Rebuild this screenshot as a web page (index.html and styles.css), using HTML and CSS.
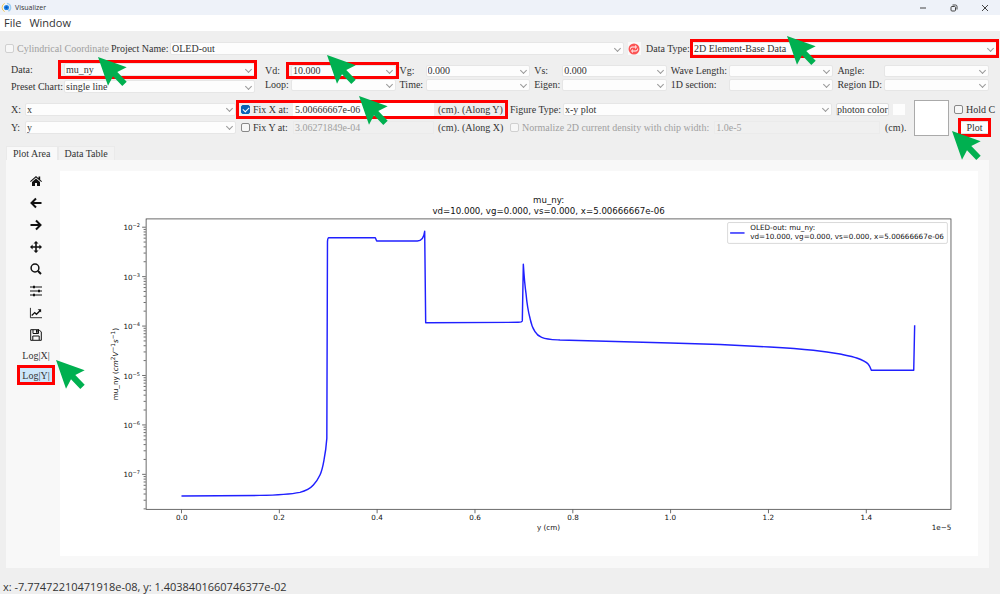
FILE: index.html
```html
<!DOCTYPE html>
<html lang="en">
<head>
<meta charset="utf-8">
<title>Visualizer</title>
<link rel="stylesheet" href="styles.css">
</head>
<body>
<svg class="defs" aria-hidden="true">
  <symbol id="pointer" viewBox="0 0 29 29"><path fill="#00b050" d="M0 0L28.7 10.3L19.3 15L28.7 24.8L24.3 29L15 19.3L10 28.7Z"/></symbol>
</svg>

<header class="titlebar">
  <svg class="logo" viewBox="0 0 12 12"><path d="M4 1.5A5 5 0 0 0 4 10.500" fill="none" stroke="#f3c64b" stroke-width="1"/><path d="M6.500 1.500A4.500 4.500 0 0 1 8 10" fill="none" stroke="#9ccdf2" stroke-width="1.500"/><circle cx="6" cy="6" r="2.800" fill="#2186e8"/><circle cx="6" cy="6" r="1.300" fill="#0a56b8"/></svg>
  <span class="title">Visualizer</span>
  <div class="window-buttons">
    <button aria-label="Minimize"><svg viewBox="0 0 10 10"><path d="M2 5h6"/></svg></button>
    <button aria-label="Restore"><svg viewBox="0 0 10 10"><rect x="2" y="3.500" width="4.500" height="4.500" rx="1"/><path d="M3.500 2h3q1.500 0 1.500 1.500v3"/></svg></button>
    <button aria-label="Close"><svg viewBox="0 0 10 10"><path d="M2 2l6 6M8 2l-6 6"/></svg></button>
  </div>
</header>
<nav class="menubar"><button>File</button><button>Window</button></nav>

<section class="project-row">
  <label class="check disabled"><input type="checkbox" disabled>Cylindrical Coordinate</label>
  <label class="project-label" for="project">Project Name:</label>
  <span class="combo project"><select id="project"><option>OLED-out</option></select></span>
  <button class="refresh" aria-label="Refresh"><svg viewBox="0 0 12 12"><circle cx="6" cy="6" r="5.500" fill="#fb5555"/><path d="M2.500 6.300V5.500Q2.500 4 4 4H8M7 2.500L8.600 4L7 5.500M9.500 5.700V6.500Q9.500 8 8 8H4M5 6.500L3.400 8L5 9.500" fill="none" stroke="#fff"/></svg></button>
  <label class="type-label" for="type">Data Type:</label>
  <span class="combo marked type"><select id="type"><option>2D Element-Base Data</option></select><svg class="pointer p-type"><use href="#pointer"/></svg></span>
</section>

<section class="data-row">
  <div class="data-grid">
    <label for="data">Data:</label>
    <span class="combo marked"><select id="data"><option>mu_ny</option></select><svg class="pointer p-data"><use href="#pointer"/></svg></span>
    <label for="preset">Preset Chart:</label>
    <span class="combo"><select id="preset"><option>single line</option></select></span>
  </div>
  <div class="bias-grid">
    <label for="vd">Vd:</label>
    <span class="combo marked"><select id="vd"><option>10.000</option></select><svg class="pointer p-vd"><use href="#pointer"/></svg></span>
    <label for="vg">Vg:</label><span class="combo"><select id="vg"><option>0.000</option></select></span>
    <label for="vs">Vs:</label><span class="combo"><select id="vs"><option>0.000</option></select></span>
    <label for="wave">Wave Length:</label><span class="combo"><select id="wave"></select></span>
    <label for="angle">Angle:</label><span class="combo"><select id="angle"></select></span>
    <label for="loop">Loop:</label><span class="combo"><select id="loop"></select></span>
    <label for="time">Time:</label><span class="combo"><select id="time"></select></span>
    <label for="eigen">Eigen:</label><span class="combo"><select id="eigen"></select></span>
    <label for="section">1D section:</label><span class="combo"><select id="section"></select></span>
    <label for="region">Region ID:</label><span class="combo"><select id="region"></select></span>
  </div>
</section>

<section class="axis-row">
  <div class="xy-grid">
    <label for="xaxis">X:</label><span class="combo"><select id="xaxis"><option>x</option></select></span>
    <label for="yaxis">Y:</label><span class="combo"><select id="yaxis"><option>y</option></select></span>
  </div>
  <div class="stack">
    <div class="fix-line marked">
      <label class="check"><input type="checkbox" checked>Fix X at:</label>
      <input class="field" type="text" value="5.00666667e-06" aria-label="X position">
      <span class="unit">(cm). (Along Y)</span>
      <svg class="pointer p-fix"><use href="#pointer"/></svg>
    </div>
    <div class="fix-line">
      <label class="check"><input type="checkbox">Fix Y at:</label>
      <input class="field" type="text" value="3.06271849e-04" aria-label="Y position" disabled>
      <span class="unit">(cm). (Along X)</span>
    </div>
  </div>
  <div class="stack figure">
    <div class="line">
      <label class="figure-label" for="figure">Figure Type:</label>
      <span class="combo"><select id="figure"><option>x-y plot</option></select></span>
      <button class="push photon">photon color</button>
      <span class="chip"></span>
    </div>
    <div class="line">
      <label class="check disabled"><input type="checkbox" disabled>Normalize 2D current density with chip width:</label>
      <input class="field" type="text" value="1.0e-5" aria-label="Chip width" disabled>
      <span class="chip-unit">(cm).</span>
    </div>
  </div>
  <div class="swatch"></div>
  <div class="stack">
    <label class="check"><input type="checkbox">Hold C</label>
    <div class="marked plot"><button class="push">Plot</button><svg class="pointer p-plot"><use href="#pointer"/></svg></div>
  </div>
</section>

<div class="tabs" role="tablist">
  <button role="tab" aria-selected="true">Plot Area</button>
  <button role="tab" aria-selected="false">Data Table</button>
</div>

<main class="panel">
  <div class="tools">
    <button aria-label="Home"><svg viewBox="0 0 12 12"><path d="M0 6.300L6 1L8.500 3.200V1.500H10.200V4.700L12 6.300L11.300 7L6 2.500L.7 7Z"/><path d="M2 6.900L6 3.500L10 6.900V11H7V8H5V11H2Z"/></svg></button>
    <button aria-label="Back"><svg viewBox="0 0 12 12"><path class="thick" d="M11.500 6H2M6 1.500L1.500 6L6 10.500"/></svg></button>
    <button aria-label="Forward"><svg viewBox="0 0 12 12"><path class="thick" d="M.5 6H10M6 1.500L10.500 6L6 10.500"/></svg></button>
    <button aria-label="Pan"><svg viewBox="0 0 12 12"><path d="M6 0L8.500 2.600H6.800V5.200H9.400V3.500L12 6L9.400 8.500V6.800H6.800V9.400H8.500L6 12L3.500 9.400H5.200V6.800H2.600V8.500L0 6L2.600 3.500V5.200H5.200V2.600H3.500Z"/></svg></button>
    <button aria-label="Zoom"><svg viewBox="0 0 12 12"><circle class="ring" cx="5" cy="5" r="3.900"/><path class="thick" d="M8 8L11 11"/></svg></button>
    <button aria-label="Configure subplots"><svg viewBox="0 0 12 12"><path class="thin" d="M0 2H12M0 6H12M0 10H12"/><path d="M3 .7h2v2.600H3zM8 4.700h2v2.600H8zM3 8.700h2v2.600H3z"/></svg></button>
    <button aria-label="Edit axes"><svg viewBox="0 0 14 12"><path class="thin" d="M.5 0V11.500H14"/><path class="ring" d="M2 9L5.500 5.500L7.500 7.500L12 3"/><path d="M9 1.500H13V5.500Z"/></svg></button>
    <button aria-label="Save"><svg viewBox="0 0 12 12"><path class="thin" d="M.7 .7H9L11.300 3V11.300H.7ZM3 .7V4.500H8.500V.7M2.800 11V7H9.200V11"/><path d="M6 1h1.700v2.700H6z"/></svg></button>
    <button class="log">Log|X|</button>
    <div class="marked log-mark"><button class="log on" aria-pressed="true">Log|Y|</button><svg class="pointer p-log"><use href="#pointer"/></svg></div>
  </div>
  <svg class="chart" viewBox="0 0 1274 534" role="img" aria-label="mu_ny against y">
    <defs>
      <path id="minor" d="M0-20.700h-3M0-32.700h-3M0-41.300h-3M0-48h-3M0-53.400h-3M0-58h-3M0-62h-3M0-65.500h-3"/>
    </defs>
    <g class="axis">
      <rect x="119.500" y="66.500" width="1117" height="403"/>
      <path d="M168.600 470v5M304.400 470v5M440.100 470v5M575.900 470v5M711.700 470v5M847.400 470v5M983.200 470v5M1119 470v5"/>
      <path d="M119 78h-5M119 146.600h-5M119 215.200h-5M119 283.800h-5M119 352.400h-5M119 421h-5"/>
      <use href="#minor" x="119" y="146.600"/><use href="#minor" x="119" y="215.200"/><use href="#minor" x="119" y="283.800"/><use href="#minor" x="119" y="352.400"/><use href="#minor" x="119" y="421"/><use href="#minor" x="119" y="489.600"/>
    </g>
    <path class="series" d="M168.600 451L277 450.200C300 449.800 318 449 333 446C341 444 347 441 351.600 435.800C356 431 358 428 360.800 421.900C364 415 365 409 366.400 401C368.500 390 369.500 382 370.300 371L371.200 98Q371.500 92.600 373 92.600H437.600L439.500 97.100H495.900Q504.500 97 506.100 83.700L507.500 210.600L636 210Q641 210 641.600 208L643 129.500C644 145 645 158 646.700 169.700C648 184 650 196 652.300 204.400C654 213 656 218 659.200 223C662 228 665 229.500 668.500 230.800C676 234 684 234 693.900 234.500L847 238.700L916 240.700L985 244.300C1010 245.700 1030 247.200 1045.400 248.800C1061 250.500 1071 252 1082.500 254C1092 256 1100 257.500 1105.700 259.500C1113 262 1119 265 1121.800 268.300Q1124 271 1126 276.600H1184.800L1186.100 214"/>
    <g class="heading"><text x="678" y="45">mu_ny:</text><text x="678" y="60">vd=10.000, vg=0.000, vs=0.000, x=5.00666667e-06</text></g>
    <g class="legend">
      <rect x="926.500" y="71.500" width="305" height="29" rx="2"/>
      <path class="series" d="M930 86h20"/>
      <text x="958" y="82">OLED-out: mu_ny:</text><text x="958" y="94">vd=10.000, vg=0.000, vs=0.000, x=5.00666667e-06</text>
    </g>
    <g class="x-ticks">
      <text x="169" y="485">0.0</text><text x="304" y="485">0.2</text><text x="440" y="485">0.4</text><text x="576" y="485">0.6</text><text x="712" y="485">0.8</text><text x="847" y="485">1.0</text><text x="983" y="485">1.2</text><text x="1119" y="485">1.4</text>
      <text x="678" y="498">y (cm)</text>
    </g>
    <g class="y-ticks">
      <text x="111" y="82">10<tspan class="sup" dy="-4">−2</tspan></text>
      <text x="111" y="151">10<tspan class="sup" dy="-4">−3</tspan></text>
      <text x="111" y="219">10<tspan class="sup" dy="-4">−4</tspan></text>
      <text x="111" y="288">10<tspan class="sup" dy="-4">−5</tspan></text>
      <text x="111" y="356">10<tspan class="sup" dy="-4">−6</tspan></text>
      <text x="111" y="425">10<tspan class="sup" dy="-4">−7</tspan></text>
      <text x="1237" y="498">1e−5</text>
    </g>
    <text class="y-title" transform="translate(80 268) rotate(-90)">mu_ny (<tspan class="var">cm</tspan><tspan class="sup" dy="-4">2</tspan><tspan class="var" dy="4">V</tspan><tspan class="sup" dy="-4">−1</tspan><tspan class="var" dy="4">s</tspan><tspan class="sup" dy="-4">−1</tspan><tspan dy="4">)</tspan></text>
  </svg>
</main>

<footer class="status">x: -7.77472210471918e-08, y: 1.4038401660746377e-02</footer>
</body>
</html>
```

FILE: styles.css
```css
* { box-sizing: border-box; }

body {
  margin: 0;
  min-height: 100vh;
  display: flex;
  flex-direction: column;
  background: #efefef;
  color: #333;
  font: 10px/13px "Liberation Serif", serif;
  overflow-x: hidden;
}

button, input, select {
  font: inherit;
  color: inherit;
  margin: 0;
  padding: 0;
  border: 0;
  background: none;
}

label, span, button { white-space: nowrap; }

.defs { position: absolute; width: 0; height: 0; }

/* window frame */
.titlebar {
  display: flex;
  align-items: center;
  height: 15px;
  padding-left: 1px;
  background: #eef2f9;
  font: 7px/15px "Open Sans", sans-serif;
}
.logo { width: 11px; height: 11px; margin-right: 3px; }
.window-buttons { display: flex; margin-left: auto; }
.window-buttons button { width: 31px; height: 15px; display: grid; place-items: center; }
.window-buttons svg { width: 10px; height: 10px; fill: none; stroke: #444; }
.menubar {
  display: flex;
  gap: 8px;
  height: 16px;
  padding-left: 4px;
  background: #fff;
  font: 11px/16px "Open Sans", sans-serif;
}

/* shared controls */
.combo { position: relative; display: block; min-width: 0; }
.combo select {
  appearance: none;
  display: block;
  width: 100%;
  height: 100%;
  padding: 0 12px 0 1px;
  background: #fdfdfd;
  border: 1px solid #e6e6e6;
  border-radius: 2px;
  line-height: 11px;
}
.combo::before {
  content: "";
  position: absolute;
  right: 4px;
  top: calc(50% - 3px);
  width: 4px;
  height: 4px;
  border: solid #999;
  border-width: 0 1px 1px 0;
  transform: rotate(45deg);
  pointer-events: none;
}
.check { display: flex; align-items: center; gap: 3px; }
.check input {
  appearance: none;
  flex: none;
  width: 9px;
  height: 9px;
  border: 1px solid #888;
  border-radius: 2px;
  background: #f7f7f7;
}
.check input:checked { background: #0a62b5; border-color: #0a62b5; }
.check input:checked::before {
  content: "";
  display: block;
  width: 5px;
  height: 3px;
  margin: 1px;
  border: solid #fff;
  border-width: 0 0 1px 1px;
  transform: rotate(-45deg);
}
.disabled { color: #a0a0a0; }
.check input:disabled { border-color: #d0d0d0; }
.field { min-width: 0; height: 13px; padding-left: 2px; background: #fff; }
.field:disabled { background: #f0f0f0; color: #a0a0a0; border: 1px solid #ebebeb; padding-left: 1px; }
.push { height: 13px; background: #fdfdfd; border: 1px solid #ddd; border-radius: 2px; line-height: 11px; }

/* tutorial highlights */
.marked { position: relative; }
.marked::after {
  content: "";
  position: absolute;
  inset: -3px -2px;
  border: 3px solid #f00;
  pointer-events: none;
}
.pointer { position: absolute; z-index: 2; width: 29px; height: 29px; pointer-events: none; }
.p-type { left: 95px; top: -6px; }
.p-data { left: 34px; top: -6px; }
.p-vd { left: 36px; top: -10px; }
.p-fix { left: 118px; top: -7px; }
.p-plot { left: -8px; top: 10px; }
.p-log { left: 37px; top: -8px; }

/* project row */
.project-row { display: flex; align-items: center; height: 13px; margin: 11px 3px 0 5px; }
.project-row .combo { height: 13px; }
.project-label { width: 59px; margin-left: 7px; }
.project-row .check { width: 99px; }
.project { flex: 454 1 0; }
.refresh { width: 13px; height: 13px; margin: 0 5px 0 4px; background: #fafafa; }
.refresh svg { display: block; width: 12px; height: 12px; }
.type-label { width: 46px; }
.type { flex: 305 1 0; }

/* data and bias row */
.data-row {
  display: grid;
  grid-template-columns: 244fr 724fr;
  gap: 10px;
  align-items: center;
  margin: 8px 11px 0;
}
.data-grid { display: grid; grid-template: 13px 13px / 53px 1fr; row-gap: 4px; }
.data-grid .marked::after { left: -6px; }
.bias-grid {
  display: grid;
  grid-template: 12px 12px / 26px 1fr 30px 1fr 32px 1fr 62px 1fr 51px 1fr;
  row-gap: 2px;
  line-height: 12px;
}
.bias-grid label { padding-left: 4px; }
.bias-grid label:nth-child(20n + 1), .bias-grid label:nth-child(20n + 11) { padding-left: 0; }
.bias-grid select { line-height: 10px; }
.bias-grid .marked::after { inset: -3px -3px -2px -5px; }

/* axis row */
.axis-row {
  display: grid;
  grid-template-columns: 225fr 262fr 401fr 35px 35px;
  gap: 5px;
  align-items: center;
  margin: 7px 11px 0;
}
.axis-row > * { min-width: 0; }
.xy-grid { display: grid; grid-template: 13px 13px / 14px 1fr; row-gap: 5px; }
.stack { display: grid; grid-template: 13px 13px / 100%; row-gap: 5px; }
.fix-line { display: flex; align-items: center; }
.fix-line .check { width: 52px; }
.fix-line .field { flex: 1; }
.fix-line.marked::after { inset: -3px -5px; }
.unit { width: 69px; padding-left: 4px; }
.figure { padding: 0 4px 0 2px; }
.line { display: flex; align-items: center; }
.line .combo { flex: 1; height: 13px; }
.line .field { flex: 1; margin: 0 5px; }
.figure-label { width: 53px; }
.photon { width: 53px; margin: 0 4px; }
.chip { width: 12px; height: 11px; background: #fdfdfd; }
.chip-unit { width: 20px; }
.swatch { height: 36px; background: #fff; border: 1px solid #aaa; }
.plot { margin-left: 6px; }
.plot .push { display: block; width: 100%; }

/* tabs and panel */
.tabs { display: flex; margin: 10px 6px 0; }
.tabs button { height: 14px; padding: 0 6px; border: 1px solid #eaeaea; border-bottom: 0; background: #f2f2f2; line-height: 12px; }
.tabs button[aria-selected="true"] { background: #f9f9f9; }
.panel {
  flex: 1;
  display: grid;
  grid-template-columns: 54px 1fr;
  align-items: start;
  margin: 0 11px 0 6px;
  padding: 11px 11px 12px 0;
  background: #f8f8f8;
}
.tools { display: flex; flex-direction: column; align-items: center; margin-top: -1px; padding-left: 6px; }
.tools > button { width: 22px; height: 22px; display: grid; place-items: center; }
.tools button svg { width: 12px; height: 12px; overflow: visible; fill: #111; }
.tools .thick, .tools .ring, .tools .thin { fill: none; stroke: #111; stroke-width: 2; }
.tools .ring { stroke-width: 1.500; }
.tools .thin { stroke-width: 1; }
.tools .log { width: 34px; height: 14px; margin-top: 2px; }
.log-mark { margin-top: 6px; }
.log-mark .log { display: block; }
.tools .on { margin: 0; background: #cce6fa; }
.chart { display: block; width: 100%; height: auto; background: #fff; font-family: "DejaVu Sans", sans-serif; font-size: 10px; fill: #111; }
.axis { fill: none; stroke: #333; stroke-width: 1; }
.series { fill: none; stroke: #2020ff; stroke-width: 2; stroke-linejoin: round; }
.heading { font-size: 12px; text-anchor: middle; }
.legend rect { fill: #fff; stroke: #ccc; }
.x-ticks, .y-title { text-anchor: middle; }
.y-ticks { text-anchor: end; }
.sup { font-size: 7px; }
.y-title .sup { font-size: 8px; }
.var { font-style: italic; }

.status { height: 26px; padding: 12px 3px 0; font: 11px/14px "Open Sans", sans-serif; }
```
